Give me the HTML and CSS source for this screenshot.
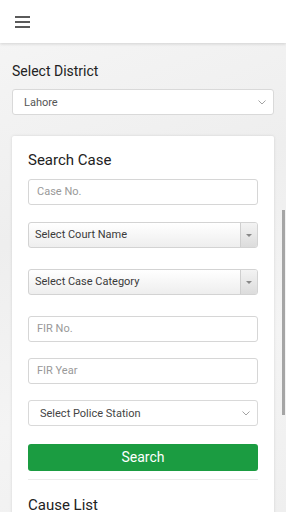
FILE: index.html
```html
<!DOCTYPE html>
<html lang="en">

<head>
    <meta charset="UTF-8">
    <meta name="viewport" content="width=device-width, initial-scale=1.0">
    <title>Case Search</title>
    <link rel="stylesheet" href="styles.css">
</head>

<body>
    <div class="header">
        <span class="menu-btn"><i></i><i></i><i></i></span>
    </div>

    <div class="content">
        <h2 class="label">Select District</h2>
        <div class="native-select district">
            <span>Lahore</span>
            <svg width="8" height="5" viewBox="0 0 8 5"><path d="M0.5 0.5 L4 4 L7.5 0.5" fill="none" stroke="#999" stroke-width="0.9"/></svg>
        </div>

        <div class="card">
            <h3 class="card-title">Search Case</h3>
            <div class="field f-case">Case No.</div>
            <div class="combo f-court">
                <span>Select Court Name</span>
                <b class="combo-btn"><em></em></b>
            </div>
            <div class="combo f-cat">
                <span>Select Case Category</span>
                <b class="combo-btn"><em></em></b>
            </div>
            <div class="field f-fir">FIR No.</div>
            <div class="field f-year">FIR Year</div>
            <div class="native-select station">
                <span>Select Police Station</span>
                <svg width="8" height="5" viewBox="0 0 8 5"><path d="M0.5 0.5 L4 4 L7.5 0.5" fill="none" stroke="#999" stroke-width="0.9"/></svg>
            </div>
            <a href="#" class="btn-search">Search</a>
            <div class="divider"></div>
            <h3 class="card-title">Cause List</h3>
        </div>
    </div>

    <span class="scroll-thumb"></span>
</body>

</html>
```

FILE: styles.css
```css
* {
    padding: 0;
    margin: 0;
    box-sizing: border-box;
}

body {
    width: 286px;
    height: 512px;
    overflow: hidden;
    position: relative;
    font-family: Roboto, "Noto Sans", sans-serif;
    background-color: #f1f1f1;
    background-image: linear-gradient(160deg, #f6f6f6 0%, #eeeeee 40%, #f4f4f4 70%, #efefef 100%);
}

.header {
    height: 43px;
    background: #fff;
    box-shadow: 0 1px 3px rgba(0, 0, 0, .14);
    display: flex;
    align-items: center;
    padding-left: 15px;
}

.menu-btn {
    display: flex;
    flex-direction: column;
    gap: 3.5px;
    margin-top: 1px;
}

.menu-btn i {
    display: block;
    width: 15px;
    height: 1.5px;
    background: #5a5a5a;
}

.content {
    padding: 0 12px;
}

.label {
    font-size: 14px;
    font-weight: 400;
    color: #222;
    margin-top: 20px;
    line-height: 16px;
}

.native-select {
    display: flex;
    align-items: center;
    justify-content: space-between;
    height: 26px;
    background: #fff;
    border: 1px solid #d9d9d9;
    border-radius: 3px;
    font-size: 11px;
    color: #555;
}

.district {
    margin-top: 10px;
    padding: 0 7px 0 11px;
}

.station {
    margin-top: 16px;
    padding: 0 7px 0 11px;
    color: #444;
}

.card {
    margin-top: 21px;
    background: #fff;
    border-radius: 2px;
    box-shadow: 0 0 3px rgba(0, 0, 0, .12);
    padding: 15px 16px 20px;
    height: 420px;
}

.card-title {
    font-size: 15px;
    font-weight: 400;
    color: #222;
    line-height: 18px;
}

.field {
    height: 26px;
    border: 1px solid #d6d6d6;
    border-radius: 3px;
    padding-left: 8px;
    font-size: 11px;
    line-height: 24px;
    color: #999;
    background: #fff;
}

.f-case {
    margin-top: 10px;
}

.f-fir {
    margin-top: 21px;
}

.f-year {
    margin-top: 16px;
}

.combo {
    display: flex;
    align-items: stretch;
    height: 26px;
    border: 1px solid #d3d3d3;
    border-radius: 3px;
    background: linear-gradient(#ffffff, #eeeeee);
    font-size: 11px;
    color: #3a3a3a;
    overflow: hidden;
}

.combo span {
    flex: 1;
    padding-left: 6px;
    line-height: 24px;
}

.combo-btn {
    width: 17px;
    border-left: 1px solid #cfcfcf;
    background: linear-gradient(#f3f3f3, #dcdcdc);
    display: flex;
    align-items: center;
    justify-content: center;
}

.combo-btn em {
    width: 0;
    height: 0;
    border-left: 3px solid transparent;
    border-right: 3px solid transparent;
    border-top: 3px solid #888;
}

.f-court {
    margin-top: 17px;
}

.f-cat {
    margin-top: 21px;
}

.btn-search {
    display: block;
    margin-top: 18px;
    height: 27px;
    line-height: 27px;
    background: #1b9c41;
    border-radius: 3px;
    color: #fff;
    text-align: center;
    font-size: 14px;
    text-decoration: none;
}

.divider {
    margin-top: 8px;
    height: 1px;
    background: #ececec;
    margin-bottom: 16px;
}

.scroll-thumb {
    position: absolute;
    right: 1px;
    top: 210px;
    width: 3px;
    height: 205px;
    background: #a5a5a5;
}
```
